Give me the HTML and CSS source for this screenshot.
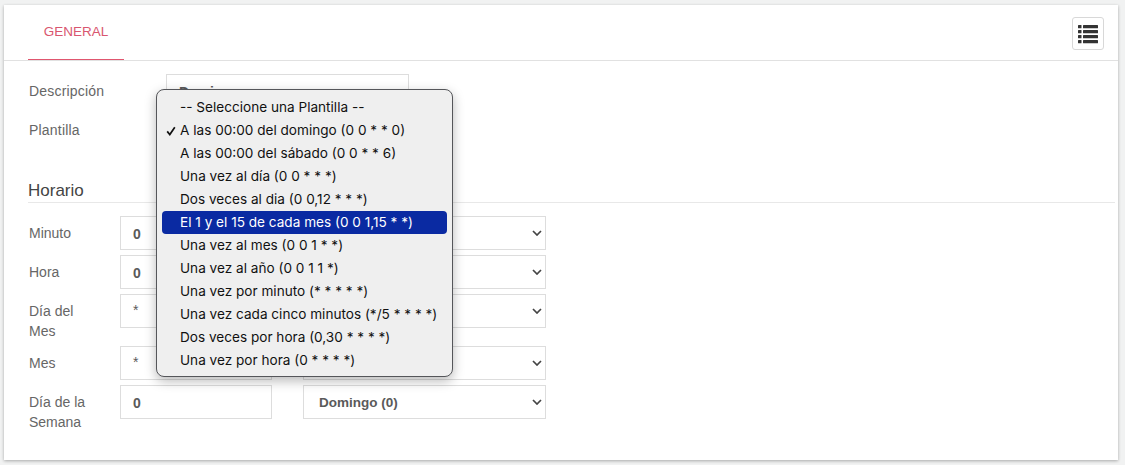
FILE: index.html
```html
<!DOCTYPE html>
<html lang="es">
<head>
<meta charset="utf-8">
<title>General</title>
<link rel="stylesheet" href="styles.css">
</head>
<body>
<main class="card">
  <header class="tabs">
    <div class="tab">GENERAL</div>
    <button class="list-btn" aria-label="Lista">
      <svg width="20" height="20" viewBox="0 0 20 20"><g fill="#333"><rect x="0" y="1" width="3.5" height="3.2" rx=".5"/><rect x="0" y="6" width="3.5" height="3.2" rx=".5"/><rect x="0" y="11" width="3.5" height="3.2" rx=".5"/><rect x="0" y="16" width="3.5" height="3.2" rx=".5"/><rect x="5" y="1" width="15" height="3.2" rx=".5"/><rect x="5" y="6" width="15" height="3.2" rx=".5"/><rect x="5" y="11" width="15" height="3.2" rx=".5"/><rect x="5" y="16" width="15" height="3.2" rx=".5"/></g></svg>
    </button>
  </header>

  <section class="top-form">
    <div class="top-row">
      <label class="top-label">Descripción</label>
      <div class="field desc-field">Domingo</div>
    </div>
    <div class="top-row plantilla-row">
      <label class="top-label">Plantilla</label>
    </div>
  </section>

  <h2 class="section-title">Horario</h2>

  <section class="schedule">
    <div class="row">
      <label class="row-label">Minuto</label>
      <div class="field num">0</div>
      <div class="field sel"><svg class="chev" width="10" height="6" viewBox="0 0 10 6"><path d="M1 1l4 4 4-4" fill="none" stroke="#444" stroke-width="1.7"/></svg></div>
    </div>
    <div class="row">
      <label class="row-label">Hora</label>
      <div class="field num">0</div>
      <div class="field sel"><svg class="chev" width="10" height="6" viewBox="0 0 10 6"><path d="M1 1l4 4 4-4" fill="none" stroke="#444" stroke-width="1.7"/></svg></div>
    </div>
    <div class="row row-tall">
      <label class="row-label">Día del Mes</label>
      <div class="field num star">*</div>
      <div class="field sel"><svg class="chev" width="10" height="6" viewBox="0 0 10 6"><path d="M1 1l4 4 4-4" fill="none" stroke="#444" stroke-width="1.7"/></svg></div>
    </div>
    <div class="row">
      <label class="row-label">Mes</label>
      <div class="field num star">*</div>
      <div class="field sel"><svg class="chev" width="10" height="6" viewBox="0 0 10 6"><path d="M1 1l4 4 4-4" fill="none" stroke="#444" stroke-width="1.7"/></svg></div>
    </div>
    <div class="row row-tall">
      <label class="row-label">Día de la Semana</label>
      <div class="field num">0</div>
      <div class="field sel">Domingo (0)<svg class="chev" width="10" height="6" viewBox="0 0 10 6"><path d="M1 1l4 4 4-4" fill="none" stroke="#444" stroke-width="1.7"/></svg></div>
    </div>
  </section>

  <ul class="menu">
    <li>-- Seleccione una Plantilla --</li>
    <li><svg class="check" width="10" height="10" viewBox="0 0 10 10"><path d="M1.2 5.4 3.8 8.6 8.8 1.2" fill="none" stroke="#111" stroke-width="1.7"/></svg>A las 00:00 del domingo (0 0 * * 0)</li>
    <li>A las 00:00 del sábado (0 0 * * 6)</li>
    <li>Una vez al día (0 0 * * *)</li>
    <li>Dos veces al dia (0 0,12 * * *)</li>
    <li class="active">El 1 y el 15 de cada mes (0 0 1,15 * *)</li>
    <li>Una vez al mes (0 0 1 * *)</li>
    <li>Una vez al año (0 0 1 1 *)</li>
    <li>Una vez por minuto (* * * * *)</li>
    <li>Una vez cada cinco minutos (*/5 * * * *)</li>
    <li>Dos veces por hora (0,30 * * * *)</li>
    <li>Una vez por hora (0 * * * *)</li>
  </ul>
</main>
</body>
</html>
```
FILE: styles.css
```css
* { box-sizing: border-box; }
html, body { height: 100%; }
body {
  margin: 0;
  background: #f1f2f2;
  font-family: "Liberation Sans", Arial, sans-serif;
  font-size: 14px;
  color: #666;
  padding: 5px 7px 5px 4px;
  overflow: hidden;
}
.card {
  position: relative;
  height: 455px;
  background: #fff;
  box-shadow: 0 1px 3px rgba(0,0,0,.3);
  padding: 0 3px 0 24px;
}
.tabs {
  height: 56px;
  margin: 0 -3px 0 -24px;
  padding: 0 14px 0 24px;
  border-bottom: 1px solid #e1e1e1;
  display: flex;
  justify-content: space-between;
  align-items: flex-start;
}
.tab {
  width: 96px;
  height: 55px;
  padding-top: 19px;
  text-align: center;
  font-size: 13.5px;
  line-height: 16px;
  color: #d9566f;
  border-bottom: 1px solid #e0566f;
}
.list-btn {
  width: 32px;
  height: 33px;
  margin-top: 12px;
  padding: 0;
  background: #fff;
  border: 1px solid #d8d8d8;
  border-radius: 3px;
  display: flex;
  align-items: center;
  justify-content: center;
}
.top-form { padding-top: 13px; }
.top-row {
  display: flex;
  align-items: flex-start;
  height: 39px;
}
.top-label {
  width: 138px;
  padding-left: 1px;
  padding-top: 9px;
  line-height: 16px;
  letter-spacing: .2px;
}
.field {
  height: 34px;
  background: #fff;
  border: 1px solid #ddd;
  font-size: 13.5px;
  font-weight: 700;
  line-height: 34px;
  color: #5a5a5a;
}
.desc-field {
  width: 243px;
  padding-left: 12px;
  font-size: 14px;
}
.plantilla-row { height: 39px; }
.section-title {
  margin: 13px 0 0;
  height: 38px;
  border-bottom: 1px solid #e8e8e8;
  font-size: 17px;
  font-weight: 400;
  line-height: 24px;
  color: #444;
  padding-top: 14px;
}
.schedule { padding-top: 13px; }
.row {
  display: flex;
  align-items: flex-start;
  height: 39px;
}
.row-tall { height: 52px; }
.row-label {
  width: 92px;
  padding: 7px 26px 0 1px;
  line-height: 20px;
}
.num {
  width: 152px;
  padding-left: 12px;
  font-size: 14px;
}
.star { font-weight: 400; line-height: 30px; }
.sel {
  position: relative;
  width: 243px;
  margin-left: 31px;
  padding-left: 15px;
}
.chev {
  position: absolute;
  right: 3px;
  top: 13px;
}
.menu {
  position: absolute;
  left: 152px;
  top: 84px;
  width: 297px;
  height: 288px;
  margin: 0;
  padding: 6px 5px;
  list-style: none;
  background: #efefef;
  border: 1px solid #55565a;
  border-radius: 8px;
  box-shadow: 0 4px 12px rgba(0,0,0,.28);
  font-family: Inter, "Liberation Sans", sans-serif;
  font-size: 13.6px;
  color: #111;
}
.menu li {
  height: 23px;
  line-height: 23px;
  padding-left: 18px;
  border-radius: 4px;
  white-space: nowrap;
  position: relative;
}
.check {
  position: absolute;
  left: 4px;
  top: 7px;
}
.menu .active {
  background: #0a2aa2;
  color: #fff;
}
```
